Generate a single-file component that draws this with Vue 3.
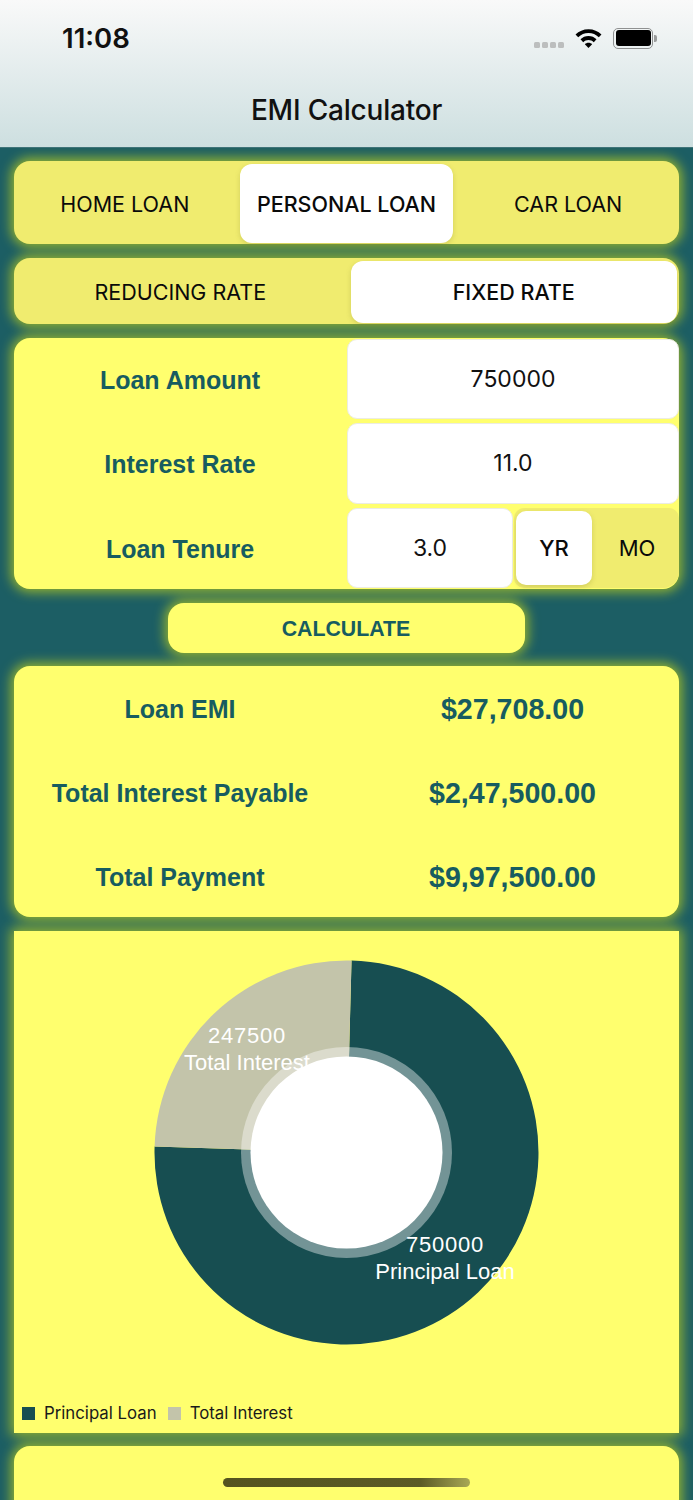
<script setup>
const loanTypes = [
  { label: 'HOME LOAN', active: false },
  { label: 'PERSONAL LOAN', active: true },
  { label: 'CAR LOAN', active: false }
]
const rateTypes = [
  { label: 'REDUCING RATE', active: false },
  { label: 'FIXED RATE', active: true }
]
const results = [
  { label: 'Loan EMI', value: '$27,708.00' },
  { label: 'Total Interest Payable', value: '$2,47,500.00' },
  { label: 'Total Payment', value: '$9,97,500.00' }
]
const cx = 332.5
const cy = 221.5
const r = 192
function point(deg) {
  const a = (deg * Math.PI) / 180
  return `${(cx + r * Math.sin(a)).toFixed(2)} ${(cy - r * Math.cos(a)).toFixed(2)}`
}
function slice(from, to) {
  const large = to - from > 180 ? 1 : 0
  return `M${cx} ${cy}L${point(from)}A${r} ${r} 0 ${large} 1 ${point(to)}Z`
}
const principalPath = slice(1.5, 271.8)
const interestPath = slice(271.8, 361.5)
</script>

<template>
  <div class="page">
    <header class="header">
      <div class="status">
        <span class="time">11:08</span>
        <div class="status-icons">
          <div class="dots"><i></i><i></i><i></i><i></i></div>
          <svg class="wifi" width="27" height="21" viewBox="1 2 26 19">
            <path d="M14 2.5C9 2.5 4.8 4.4 1.5 7.6l2.6 2.7C6.8 7.8 10.2 6.3 14 6.3s7.2 1.5 9.9 4l2.6-2.7C23.2 4.4 19 2.5 14 2.5z" />
            <path d="M14 9.2c-3 0-5.7 1.2-7.7 3.1l2.6 2.7c1.4-1.3 3.1-2.1 5.1-2.1s3.7.8 5.1 2.1l2.6-2.7c-2-1.9-4.7-3.1-7.7-3.1z" />
            <path d="M14 15.6c-1.4 0-2.6.5-3.5 1.4l3.5 3.7 3.5-3.7c-.9-.9-2.1-1.4-3.5-1.4z" />
          </svg>
          <div class="battery"><div class="battery-fill"></div></div>
          <div class="battery-cap"></div>
        </div>
      </div>
      <h1 class="title">EMI Calculator</h1>
    </header>

    <main class="content">
      <div class="segment segment-loan card">
        <div v-for="t in loanTypes" :key="t.label" class="seg-item" :class="{ active: t.active }">{{ t.label }}</div>
      </div>

      <div class="segment segment-rate card">
        <div v-for="t in rateTypes" :key="t.label" class="seg-item" :class="{ active: t.active }">{{ t.label }}</div>
      </div>

      <section class="form card">
        <div class="form-row">
          <div class="label">Loan Amount</div>
          <div class="field">750000</div>
        </div>
        <div class="form-row">
          <div class="label">Interest Rate</div>
          <div class="field">11.0</div>
        </div>
        <div class="form-row">
          <div class="label">Loan Tenure</div>
          <div class="tenure">
            <div class="field">3.0</div>
            <div class="unit">
              <div class="unit-item active">YR</div>
              <div class="unit-item">MO</div>
            </div>
          </div>
        </div>
      </section>

      <button class="calc card" type="button">CALCULATE</button>

      <section class="results card">
        <div v-for="row in results" :key="row.label" class="result-row">
          <div class="label">{{ row.label }}</div>
          <div class="value">{{ row.value }}</div>
        </div>
      </section>

      <section class="chart card">
        <svg class="donut" width="665" height="456" viewBox="0 0 665 456">
          <path :d="principalPath" fill="#174e51" />
          <path :d="interestPath" fill="#c3c4aa" />
          <circle :cx="cx" :cy="cy" r="105.5" fill="rgba(255,255,255,0.4)" />
          <circle :cx="cx" :cy="cy" r="96" fill="#fff" />
          <g class="slice-text">
            <text class="num" x="233" y="112">247500</text>
            <text x="233" y="139">Total Interest</text>
            <text class="num" x="431" y="321">750000</text>
            <text x="431" y="348">Principal Loan</text>
          </g>
        </svg>
        <div class="legend">
          <span class="swatch swatch-principal"></span>
          <span class="legend-text">Principal Loan</span>
          <span class="swatch swatch-interest"></span>
          <span class="legend-text">Total Interest</span>
        </div>
      </section>

      <section class="footer-card card"></section>
    </main>

    <div class="home-bar"></div>
  </div>
</template>

<style scoped>
.page {
  position: relative;
  width: 693px;
  height: 1500px;
  overflow: hidden;
  background: #1c5e64;
  font-family: Inter, "Liberation Sans", sans-serif;
  color: #000;
}
.header {
  height: 148px;
  box-sizing: border-box;
  background: linear-gradient(#f9f9f9, #cddfe0);
  border-bottom: 1px solid #3f7479;
  position: relative;
  z-index: 2;
}
.status {
  height: 76px;
  display: flex;
  align-items: center;
  justify-content: space-between;
  padding: 0 36px 0 62px;
}
.time {
  font-size: 27.5px;
  font-weight: 600;
  color: #111;
}
.status-icons {
  display: flex;
  align-items: center;
}
.dots {
  display: flex;
  gap: 2px;
  margin-top: 14px;
  margin-right: 11px;
}
.dots i {
  width: 6px;
  height: 6px;
  border-radius: 1.5px;
  background: #bcbebe;
}
.wifi {
  fill: #000;
  margin-right: 11px;
}
.battery {
  box-sizing: border-box;
  width: 40px;
  height: 21px;
  border: 1.5px solid #8f9191;
  border-radius: 5px;
  padding: 1.5px;
}
.battery-fill {
  height: 100%;
  background: #000;
  border-radius: 3px;
}
.battery-cap {
  width: 3px;
  height: 7px;
  margin-left: 1px;
  background: #9a9c9c;
  border-radius: 0 2px 2px 0;
}
.title {
  margin: 17px 0 0;
  text-align: center;
  font-size: 28px;
  line-height: 34px;
  font-weight: 500;
  color: #111;
  letter-spacing: -0.2px;
}
.content {
  display: flex;
  flex-direction: column;
  padding: 13px 14px 0;
}
.card {
  box-shadow: 0 0 12px 3px rgba(255, 255, 0, 0.55);
}
.segment {
  display: grid;
  background: #f0ec6f;
  border-radius: 16px;
  padding: 3px 0 1px;
  box-sizing: border-box;
}
.seg-item {
  display: flex;
  align-items: center;
  justify-content: center;
  font-size: 21.5px;
  color: #0a0a0a;
  border-radius: 12px;
}
.seg-item.active {
  background: #fff;
  font-weight: 500;
  box-shadow: 0 2px 5px rgba(120, 120, 40, 0.25);
}
.segment-loan {
  height: 83px;
  grid-template-columns: repeat(3, 1fr);
}
.segment-loan .seg-item.active {
  margin: 0 4px;
}
.segment-rate {
  height: 66px;
  margin-top: 14px;
  grid-template-columns: repeat(2, 1fr);
}
.segment-rate .seg-item.active {
  margin: 0 2px 0 4px;
}
.form {
  margin-top: 14px;
  height: 251px;
  background: #ffff6e;
  border-radius: 16px;
  display: flex;
  flex-direction: column;
  gap: 4px;
  padding: 1px 0;
  box-sizing: border-box;
}
.form-row {
  flex: 1;
  display: grid;
  grid-template-columns: 333px 332px;
}
.label {
  display: flex;
  align-items: center;
  justify-content: center;
  padding: 3px 1px 0 0;
  font-family: "Liberation Sans", Arial, sans-serif;
  font-weight: 700;
  font-size: 25px;
  color: #175c60;
}
.field {
  display: flex;
  align-items: center;
  justify-content: center;
  background: #fff;
  border: 1px solid #ecece2;
  border-radius: 10px;
  box-sizing: border-box;
  font-size: 23px;
  color: #111;
  height: 100%;
  min-width: 0;
}
.tenure {
  display: grid;
  grid-template-columns: 166px 166px;
}
.unit {
  display: flex;
  background: #f0ec6f;
  border-radius: 10px 10px 16px 10px;
  margin-left: 1px;
  padding: 3px 2px;
  box-sizing: border-box;
}
.unit-item {
  display: flex;
  align-items: center;
  justify-content: center;
  font-size: 22px;
  color: #0a0a0a;
  border-radius: 10px;
  flex: 1;
  padding-left: 5px;
}
.unit-item.active {
  flex: 0 0 76px;
  padding-left: 0;
  background: #fff;
  font-weight: 500;
  box-shadow: 0 2px 5px rgba(120, 120, 40, 0.25);
}
.calc {
  align-self: center;
  display: block;
  margin: 14px 0 0;
  width: 357px;
  height: 50px;
  border: 0;
  border-radius: 16px;
  background: #ffff6e;
  font-family: "Liberation Sans", Arial, sans-serif;
  font-weight: 700;
  font-size: 21.3px;
  color: #175c60;
  padding: 2px 1px 0 0;
}
.results {
  margin-top: 13px;
  height: 251px;
  background: #ffff6e;
  border-radius: 16px;
  display: flex;
  flex-direction: column;
}
.result-row {
  flex: 1;
  display: grid;
  grid-template-columns: 333px 332px;
  padding-top: 1px;
}
.value {
  display: flex;
  align-items: center;
  justify-content: center;
  padding: 3px 1px 0 0;
  font-family: "Liberation Sans", Arial, sans-serif;
  font-weight: 700;
  font-size: 28.6px;
  color: #175c60;
}
.chart {
  margin-top: 14px;
  height: 502px;
  background: #ffff6e;
  display: flex;
  flex-direction: column;
}
.donut {
  display: block;
}
.slice-text text {
  font-family: "Liberation Sans", Arial, sans-serif;
  font-size: 22px;
  fill: #fff;
  text-anchor: middle;
}
.slice-text .num {
  letter-spacing: 0.8px;
}
.legend {
  display: flex;
  align-items: center;
  height: 46px;
  padding-left: 8px;
  box-sizing: border-box;
  padding-top: 6px;
}
.swatch {
  width: 13px;
  height: 13px;
  margin-right: 9px;
}
.swatch-principal {
  background: #174e51;
}
.swatch-interest {
  background: #c3c4aa;
}
.legend-text {
  font-size: 16.8px;
  color: #1a1a1a;
  margin-right: 11px;
}
.footer-card {
  margin-top: 13px;
  height: 100px;
  background: #ffff6e;
  border-radius: 16px;
}
.home-bar {
  position: absolute;
  left: 223px;
  top: 1478px;
  width: 247px;
  height: 9px;
  border-radius: 5px;
  background: linear-gradient(90deg, #55541f 0%, #5c5b26 80%, #a9a955 100%);
}
</style>
